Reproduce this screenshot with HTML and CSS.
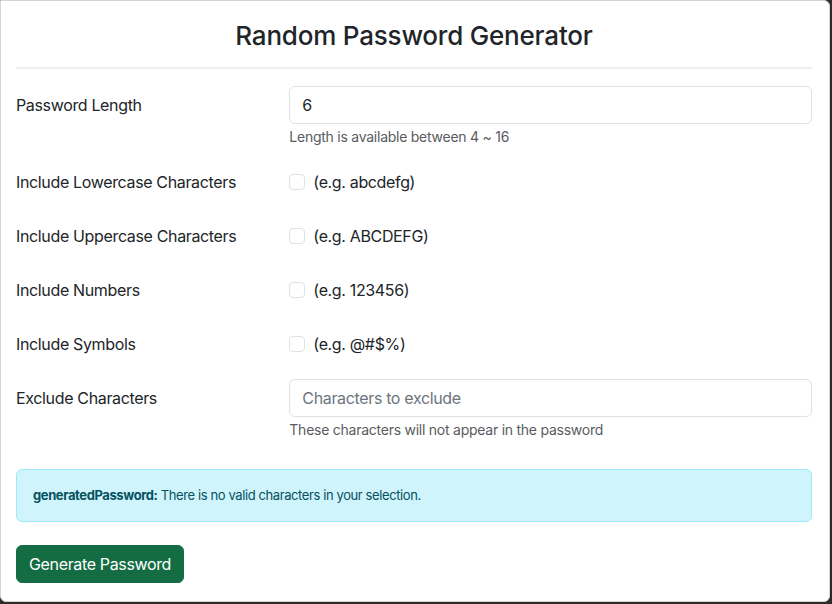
FILE: index.html
```html
<!DOCTYPE html>
<html lang="en">
<head>
<meta charset="utf-8">
<title>Random Password Generator</title>
<link rel="stylesheet" href="styles.css">
</head>
<body>
<div class="card">
  <h1 class="title">Random Password Generator</h1>
  <hr class="divider">
  <form class="form">
    <div class="row">
      <label class="label" for="len">Password Length</label>
      <div class="field">
        <input id="len" class="input" type="text" value="6">
        <div class="help">Length is available between 4 ~ 16</div>
      </div>
    </div>
    <div class="row">
      <div class="label">Include Lowercase Characters</div>
      <div class="field check"><span class="box"></span><span>(e.g. abcdefg)</span></div>
    </div>
    <div class="row">
      <div class="label">Include Uppercase Characters</div>
      <div class="field check"><span class="box"></span><span>(e.g. ABCDEFG)</span></div>
    </div>
    <div class="row">
      <div class="label">Include Numbers</div>
      <div class="field check"><span class="box"></span><span>(e.g. 123456)</span></div>
    </div>
    <div class="row">
      <div class="label">Include Symbols</div>
      <div class="field check"><span class="box"></span><span>(e.g. @#$%)</span></div>
    </div>
    <div class="row">
      <label class="label" for="ex">Exclude Characters</label>
      <div class="field">
        <input id="ex" class="input" type="text" placeholder="Characters to exclude">
        <div class="help">These characters will not appear in the password</div>
      </div>
    </div>
  </form>
  <div class="alert"><strong>generatedPassword:</strong> There is no valid characters in your selection.</div>
  <button class="btn" type="button">Generate Password</button>
</div>
</body>
</html>
```
FILE: styles.css
```css
html, body {
  margin: 0;
  padding: 0;
}
body {
  background: #2b2b2b;
  width: 832px;
  height: 604px;
  overflow: hidden;
  font-family: Inter, "Noto Sans", sans-serif;
  color: #212529;
  letter-spacing: -0.35px;
}
.card {
  box-sizing: border-box;
  width: 830px;
  height: 602px;
  background: #fff;
  border: 1px solid #d4d4d4;
  border-radius: 0 6px 6px 6px;
  padding: 0 17px 0 15px;
}
.title {
  margin: 19px 0 0;
  font-size: 26px;
  line-height: 31px;
  font-weight: 500;
  text-align: center;
  letter-spacing: -0.2px;
}
.divider {
  margin: 16px 0 17px;
  border: 0;
  border-top: 2px solid #f0f0f0;
}
.form {
  display: flex;
  flex-direction: column;
  gap: 16px;
}
.row {
  display: grid;
  grid-template-columns: 249.33px 1fr;
  column-gap: 24px;
  align-items: start;
}
.label {
  padding: 7px 0;
  font-size: 16px;
  line-height: 24px;
}
.input {
  box-sizing: border-box;
  display: block;
  width: 100%;
  height: 38px;
  padding: 6px 12px;
  font: inherit;
  font-size: 16px;
  line-height: 24px;
  letter-spacing: -0.35px;
  color: #212529;
  border: 1px solid #dee2e6;
  border-radius: 6px;
  outline: none;
}
.input::placeholder {
  color: #6c757d;
}
.help {
  margin-top: 2px;
  font-size: 14px;
  line-height: 21px;
  color: #595c5f;
  letter-spacing: -0.25px;
}
.check {
  display: flex;
  align-items: center;
  gap: 8px;
  padding: 7px 0;
  font-size: 16px;
  line-height: 24px;
}
.box {
  box-sizing: border-box;
  width: 16px;
  height: 16px;
  border: 1px solid #dee2e6;
  border-radius: 4px;
  background: #fff;
}
.alert {
  margin-top: 29px;
  padding: 16px;
  font-size: 13px;
  line-height: 19px;
  color: #055160;
  background: #cff4fc;
  border: 1px solid #9eeaf9;
  border-radius: 6px;
  letter-spacing: -0.4px;
}
.alert strong {
  font-weight: 700;
}
.btn {
  margin-top: 23px;
  height: 38px;
  padding: 6px 12px;
  font: inherit;
  font-size: 16px;
  line-height: 24px;
  letter-spacing: -0.35px;
  color: #fff;
  background: #146c43;
  border: 1px solid #146c43;
  border-radius: 6px;
}
```
